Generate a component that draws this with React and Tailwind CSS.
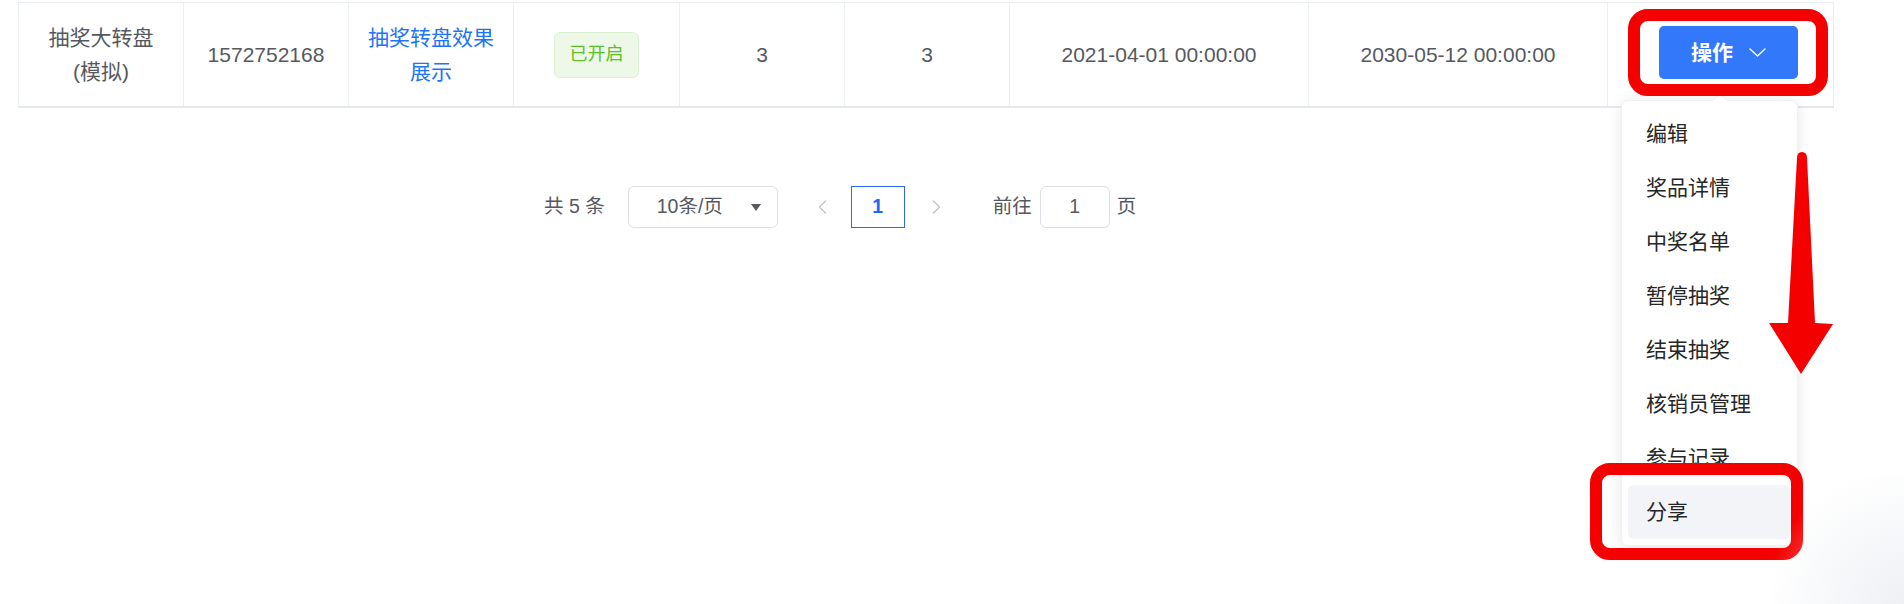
import { memo } from 'react';

const FONT = "font-['Liberation_Sans','Noto_Sans_CJK_SC',sans-serif]";

const menuItems = ['编辑', '奖品详情', '中奖名单', '暂停抽奖', '结束抽奖', '核销员管理', '参与记录', '分享'];

const Cell = ({ w, children, className = '' }) => (
  <div className={`flex items-center justify-center border-r border-[#ebeef5] ${w} ${className}`}>{children}</div>
);

const ChevronDown = () => (
  <svg width="17" height="9" viewBox="0 0 17 9" fill="none">
    <path d="M1 1l7.5 7L16 1" stroke="white" strokeWidth="1.4" strokeLinecap="round" strokeLinejoin="round" />
  </svg>
);

const Chevron = ({ dir }) => (
  <svg width="9" height="14" viewBox="0 0 9 14" fill="none">
    <path d={dir === 'left' ? 'M7.5 1L1.5 7l6 6' : 'M1.5 1l6 6-6 6'} stroke="#c0c4cc" strokeWidth="1.4" strokeLinecap="round" strokeLinejoin="round" />
  </svg>
);

const App = memo(() => {
  return (
    <div className={`relative w-[1904px] h-[604px] overflow-hidden bg-white ${FONT}`}>
      {/* Table row */}
      <div className="pt-[2px] pl-[18px]">
        <div className="flex w-[1816px] h-[106px] border-t border-[#ebeef5] border-l border-b-2 border-b-[#e6e8ef] text-[21px] text-[#55595f]">
          <Cell w="w-[165px]" className="flex-col leading-[34px]">
            <span>抽奖大转盘</span>
            <span>(模拟)</span>
          </Cell>
          <Cell w="w-[165px]">1572752168</Cell>
          <Cell w="w-[165px]" className="flex-col leading-[34px] text-[#1e74f5]">
            <span>抽奖转盘效果</span>
            <span>展示</span>
          </Cell>
          <Cell w="w-[166px]">
            <span className="flex items-center justify-center w-[85px] h-[46px] rounded-[6px] border border-[#dcf1cf] bg-[#eef8e8] text-[18px] text-[#5cbf2a]">
              已开启
            </span>
          </Cell>
          <Cell w="w-[165px]">3</Cell>
          <Cell w="w-[165px]">3</Cell>
          <Cell w="w-[299px]">2021-04-01 00:00:00</Cell>
          <Cell w="w-[299px]">2030-05-12 00:00:00</Cell>
          <Cell w="w-[226px]" className="pl-[16px]">
            <button className="flex items-center justify-center gap-[16px] w-[139px] h-[53px] mt-[-4px] rounded-[5px] bg-[#3278fa] text-white text-[21px] font-bold">
              <span>操作</span>
              <ChevronDown />
            </button>
          </Cell>
        </div>
      </div>

      {/* Pagination */}
      <div className="flex items-center mt-[78px] ml-[544px] h-[42px] text-[19.5px] text-[#55595f]">
        <span>共 5 条</span>
        <div className="flex items-center ml-[23px] w-[150px] h-[42px] rounded-[6px] border border-[#dcdfe6] pl-[28px] pr-[16px]">
          <span className="flex-1">10条/页</span>
          <svg width="10" height="7" viewBox="0 0 10 7"><path d="M0 0h10L5 7z" fill="#55595f" /></svg>
        </div>
        <div className="ml-[40px] flex items-center"><Chevron dir="left" /></div>
        <div className="ml-[24px] flex items-center justify-center w-[54px] h-[42px] border-[1.5px] border-[#2a6bf5] text-[#1e6af5] font-bold">1</div>
        <div className="ml-[27px] flex items-center"><Chevron dir="right" /></div>
        <span className="ml-[52px]">前往</span>
        <div className="ml-[8px] flex items-center justify-center w-[70px] h-[42px] rounded-[6px] border border-[#dcdfe6]">1</div>
        <span className="ml-[7px]">页</span>
      </div>

      {/* Dropdown menu */}
      <div className="absolute left-[1621px] top-[100px] w-[177px] py-[6px] bg-white rounded-[6px] border border-[#eef0f4] shadow-[0_2px_14px_rgba(0,0,0,0.10)]">
        <div className="absolute left-[92px] top-[-6px] w-[12px] h-[12px] rotate-45 bg-white border-l border-t border-[#eef0f4]" />
        {menuItems.map((item, i) => (
          <div
            key={item}
            className={`flex items-center h-[54px] mx-[6px] pl-[18px] rounded-[6px] text-[21px] text-[#262626] ${i === menuItems.length - 1 ? 'bg-[#f3f4f8]' : ''}`}
          >
            {item}
          </div>
        ))}
      </div>

      {/* Annotations */}
      <div className="absolute left-[1628px] top-[9px] w-[200px] h-[87px] border-[12px] border-[#f50000] rounded-[20px]" />
      <div className="absolute left-[1590px] top-[463px] w-[213px] h-[97px] border-[12px] border-[#f50000] rounded-[20px]" />
      <svg className="absolute left-[1765px] top-[148px]" width="72" height="230" viewBox="0 0 72 230">
        <path d="M32 10 Q32 4 37 4 Q42 4 42 10 L50 175 L68 176 L36 226 L4 175 L23 175 Z" fill="#f50000" />
      </svg>
      <div className="absolute right-0 bottom-0 w-[130px] h-[130px] bg-[radial-gradient(circle_at_100%_100%,#eef0f4_0%,rgba(255,255,255,0)_75%)]" />
    </div>
  );
});

App.displayName = 'App';
export default App;
